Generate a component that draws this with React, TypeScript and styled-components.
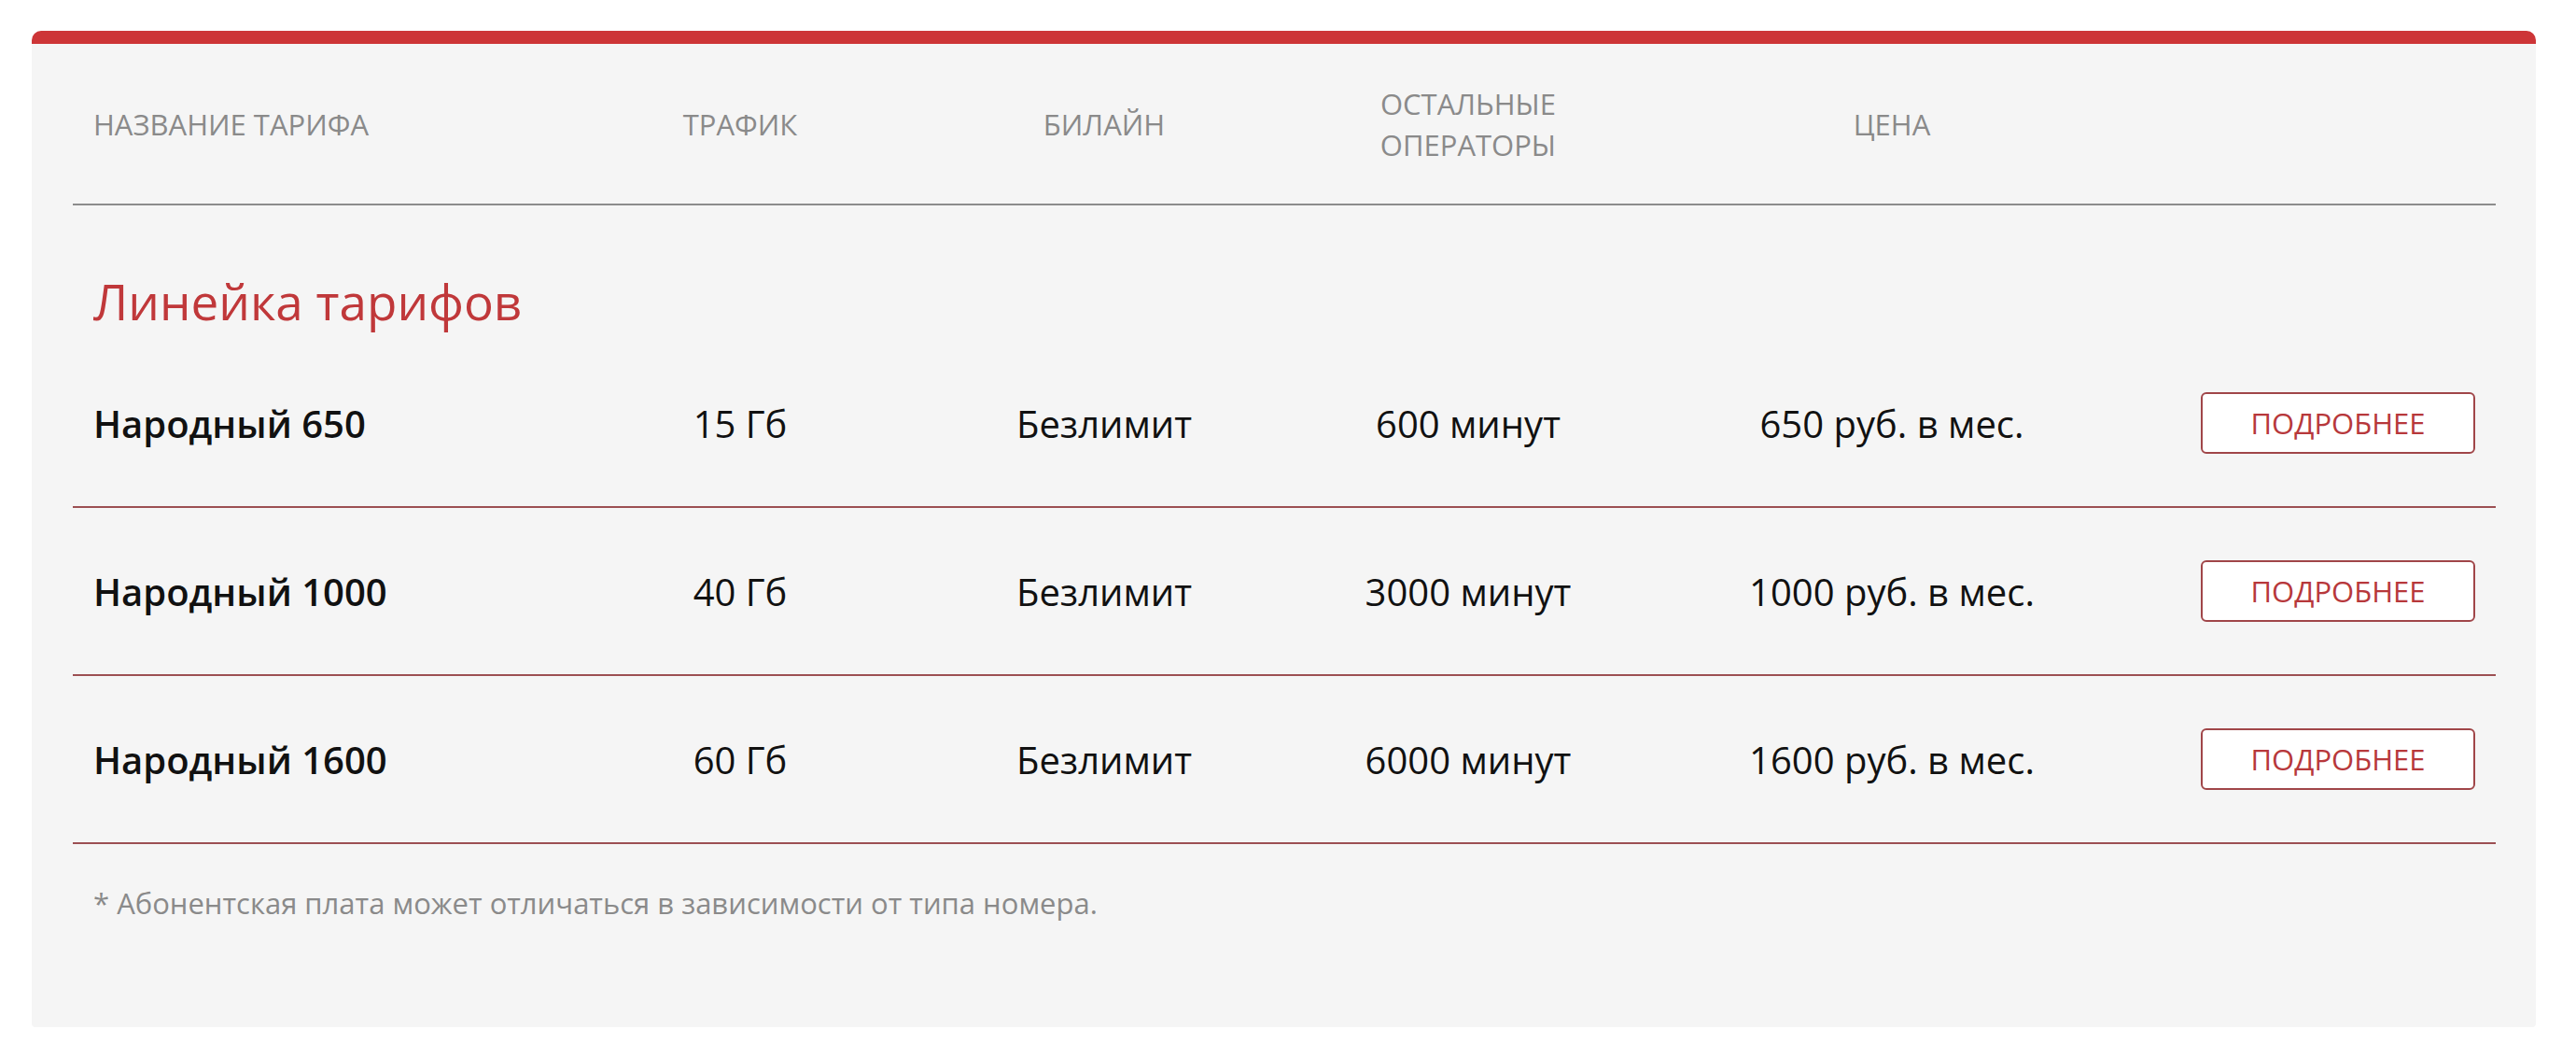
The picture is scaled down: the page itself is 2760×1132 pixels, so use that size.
import React from "react";
import styled, { createGlobalStyle } from "styled-components";

const GlobalStyle = createGlobalStyle`
  html, body {
    margin: 0;
    padding: 0;
    background: #ffffff;
  }

  body {
    font-family: "Open Sans", "Liberation Sans", sans-serif;
  }
`;

const Page = styled.div`
  padding: 33px 43px 33px 34px;
`;

const Card = styled.section`
  width: 2683px;
  background-color: #f5f5f5;
  border-top: 14px solid #cd3537;
  border-radius: 10px 10px 4px 4px;
  padding: 0 43px 112px 44px;
  box-sizing: border-box;
`;

const Grid = styled.div`
  display: grid;
  grid-template-columns: 520px 390px 390px 390px 518px 1fr;
  align-items: center;
`;

const HeadRow = styled(Grid)`
  height: 171px;
  border-bottom: 2px solid #8c8c8c;
`;

const HeadCell = styled.div<{ $left?: boolean }>`
  font-size: 31px;
  line-height: 44px;
  color: #8a8a8a;
  text-transform: uppercase;
  text-align: ${(p) => (p.$left ? "left" : "center")};
  padding-left: ${(p) => (p.$left ? "22px" : "0")};
`;

const Title = styled.h2`
  margin: 0 0 5px;
  padding: 67px 0 0 22px;
  font-size: 53px;
  font-weight: 400;
  line-height: 72px;
  color: #c0383a;
`;

const Row = styled(Grid)`
  height: 178px;
  border-bottom: 2px solid #9c5053;
`;

const Cell = styled.div`
  font-size: 40px;
  color: #111111;
  text-align: center;
`;

const NameCell = styled(Cell)`
  text-align: left;
  padding-left: 22px;
  font-weight: 600;
`;

const ActionCell = styled.div`
  display: flex;
  justify-content: flex-end;
  padding-right: 22px;
`;

const MoreButton = styled.button`
  width: 294px;
  height: 66px;
  background: #ffffff;
  border: 2px solid #a04649;
  border-radius: 6px;
  font-family: inherit;
  font-size: 31px;
  color: #b7383b;
  text-transform: uppercase;
  cursor: pointer;
`;

const Note = styled.p`
  margin: 42px 0 0;
  padding-left: 22px;
  font-size: 31px;
  line-height: 42px;
  color: #8a8a8a;
`;

const tariffs = [
  { name: "Народный 650", traffic: "15 Гб", own: "Безлимит", other: "600 минут", price: "650 руб. в мес." },
  { name: "Народный 1000", traffic: "40 Гб", own: "Безлимит", other: "3000 минут", price: "1000 руб. в мес." },
  { name: "Народный 1600", traffic: "60 Гб", own: "Безлимит", other: "6000 минут", price: "1600 руб. в мес." },
];

export default function App() {
  return (
    <>
      <GlobalStyle />
      <Page>
        <Card>
          <HeadRow>
            <HeadCell $left>Название тарифа</HeadCell>
            <HeadCell>Трафик</HeadCell>
            <HeadCell>Билайн</HeadCell>
            <HeadCell>
              Остальные
              <br />
              операторы
            </HeadCell>
            <HeadCell>Цена</HeadCell>
            <div />
          </HeadRow>

          <Title>Линейка тарифов</Title>

          {tariffs.map((t) => (
            <Row key={t.name}>
              <NameCell>{t.name}</NameCell>
              <Cell>{t.traffic}</Cell>
              <Cell>{t.own}</Cell>
              <Cell>{t.other}</Cell>
              <Cell>{t.price}</Cell>
              <ActionCell>
                <MoreButton>Подробнее</MoreButton>
              </ActionCell>
            </Row>
          ))}

          <Note>* Абонентская плата может отличаться в зависимости от типа номера.</Note>
        </Card>
      </Page>
    </>
  );
}
